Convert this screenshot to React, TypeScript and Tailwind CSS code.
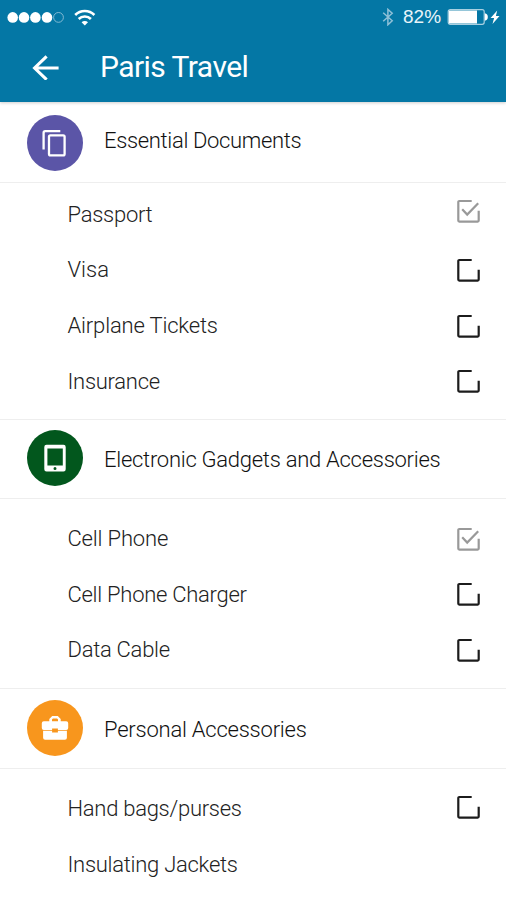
import type { ReactNode } from 'react'
import clsx from 'clsx'

type Item = {
  label: string
  state: 'done' | 'open' | 'none'
  labelClass?: string
  boxClass?: string
}

type Section = {
  title: string
  color: string
  icon: ReactNode
  header: string
  titleClass: string
  list: string
  items: Item[]
}

const sections: Section[] = [
  {
    title: 'Essential Documents',
    color: 'bg-[#5b55a7]',
    icon: <CopyIcon />,
    header: 'h-[81px] pt-px',
    titleClass: 'pb-[3px] tracking-[-0.34px]',
    list: 'pt-[4px] pb-[10px]',
    items: [
      { label: 'Passport', state: 'done', boxClass: 'mb-[7px]' },
      { label: 'Visa', state: 'open', labelClass: 'pb-px tracking-normal' },
      { label: 'Airplane Tickets', state: 'open', labelClass: 'tracking-[-0.17px]' },
      { label: 'Insurance', state: 'open', labelClass: 'pb-px', boxClass: 'mb-px' },
    ],
  },
  {
    title: 'Electronic Gadgets and Accessories',
    color: 'bg-[#02571d]',
    icon: <TabletIcon />,
    header: 'h-[79px] pb-[2px]',
    titleClass: 'pt-[3px] tracking-[-0.27px]',
    list: 'pt-[11px] pb-[11px]',
    items: [
      { label: 'Cell Phone', state: 'done', labelClass: 'tracking-[-0.17px]', boxClass: 'mt-[2px]' },
      { label: 'Cell Phone Charger', state: 'open', labelClass: 'pt-px' },
      { label: 'Data Cable', state: 'open', labelClass: 'pt-px', boxClass: 'mt-[2px]' },
    ],
  },
  {
    title: 'Personal Accessories',
    color: 'bg-[#f8961d]',
    icon: <BriefcaseIcon />,
    header: 'h-[80px] pb-[2px]',
    titleClass: 'pt-[4px] tracking-[-0.23px]',
    list: 'pt-[11px]',
    items: [
      { label: 'Hand bags/purses', state: 'open', labelClass: 'pt-[2px]', boxClass: 'mb-[2px]' },
      { label: 'Insulating Jackets', state: 'none', labelClass: 'pt-[2px]' },
    ],
  },
]

function CopyIcon() {
  return (
    <svg viewBox="0 0 28 28" className="size-7" fill="none" stroke="#fff" strokeWidth="2.3">
      <path d="M19.3 2.1H4.2a1.6 1.6 0 0 0-1.6 1.6V20.4" />
      <rect x="8" y="6.4" width="15.6" height="20" rx="1.4" />
    </svg>
  )
}

function TabletIcon() {
  return (
    <svg viewBox="0 0 24 28" className="h-7 w-6">
      <path
        fill="#fff"
        fillRule="evenodd"
        d="M3.5.8h17a2.2 2.2 0 0 1 2.2 2.2v22.2a2.2 2.2 0 0 1-2.2 2.2h-17a2.2 2.2 0 0 1-2.2-2.2V3A2.2 2.2 0 0 1 3.5.8ZM4.4 4.6v17h15.4v-17ZM12 23.1a1.5 1.5 0 1 0 0 3 1.5 1.5 0 0 0 0-3Z"
      />
    </svg>
  )
}

function BriefcaseIcon() {
  return (
    <svg viewBox="0 0 28 26" className="h-[26px] w-7">
      <path
        fill="#fff"
        fillRule="evenodd"
        d="M8.3 6.3V4L11.2.9h5.6L19.7 4v2.3h5.5a2 2 0 0 1 2 2v4.6a2 2 0 0 1-2 2h-8.3v-1.4h-5.8v1.4H2.8a2 2 0 0 1-2-2V8.3a2 2 0 0 1 2-2ZM11 6.3h6V4.5l-.9-1h-4.2l-.9 1Z"
      />
      <path fill="#fff" d="M2.1 15.8h9v1.7h5.8v-1.7h9v7a2 2 0 0 1-2 2H4.1a2 2 0 0 1-2-2Z" />
    </svg>
  )
}

function Checkbox({ done, className }: { done: boolean; className?: string }) {
  return (
    <svg
      viewBox="0 0 24 24"
      className={clsx('size-6 shrink-0', done ? 'text-[#999]' : 'text-[#1c1c1c]', className)}
      fill="none"
      stroke="currentColor"
      strokeWidth="2.2"
    >
      <path d="M15.7 2H3.3a1 1 0 0 0-1 1v18.6a1 1 0 0 0 1 1h18.4a1 1 0 0 0 1-1V11.7" />
      {done && <path d="M6.2 10.3 11.2 15.6 22.2 4.2" />}
    </svg>
  )
}

function StatusBar() {
  return (
    <div className="flex h-[34px] items-center justify-between pr-[6px] pl-[7px]">
      <div className="flex items-center">
        <svg viewBox="0 0 58 12" className="h-3 w-[58px]" fill="#fff">
          <circle cx="5.7" cy="6.4" r="5.3" />
          <circle cx="17" cy="6.4" r="5.3" />
          <circle cx="28.4" cy="6.4" r="5.3" />
          <circle cx="40" cy="6.4" r="5.3" />
          <circle cx="51.5" cy="6.4" r="4.9" fill="none" stroke="#8fc0d7" strokeWidth=".9" />
        </svg>
        <svg viewBox="0 0 22 17" className="ml-[9px] h-[17px] w-[22px]" fill="none" stroke="#fff" strokeWidth="2.6">
          <path d="M1.2 6a13.6 13.6 0 0 1 19.2 0" />
          <path d="M4.7 10a8.6 8.6 0 0 1 12.2 0" />
          <path d="M10.8 16.6 7.6 13.3a4.6 4.6 0 0 1 6.4 0Z" fill="#fff" stroke="none" />
        </svg>
      </div>
      <div className="flex items-center">
        <svg viewBox="0 0 12 18" className="h-[18px] w-3" fill="none" stroke="#8fc0d7" strokeWidth="1.5">
          <path d="m1.2 4.8 9 8-4.3 4V1.4l4.3 3.8-9 8" />
        </svg>
        <span className="ml-[9px] w-[40px] pb-px font-['Liberation_Sans'] text-[19px] leading-none text-[#e8f4f9]">
          82%
        </span>
        <svg viewBox="0 0 53 18" className="ml-[4px] h-[18px] w-[53px]">
          <rect x="1.2" y="1.7" width="36" height="14.6" rx="2" fill="none" stroke="#a9d0e1" strokeWidth="1.2" />
          <path d="M1.8 2.5H30v13H1.8z" fill="#fff" />
          <path d="M37.8 5.3q3 .6 3 3.7t-3 3.7Z" fill="#fff" />
          <path d="m50.2 2.5-6.6 7.4h3.5l-1.6 6 7-8h-3.6Z" fill="#fff" />
        </svg>
      </div>
    </div>
  )
}

export default function App() {
  return (
    <div className="h-[900px] w-[506px] overflow-hidden bg-white font-[Roboto,sans-serif]">
      <header className="h-[102px] bg-[#0477a5] shadow-[0_1px_3px_rgba(0,0,0,0.2)]">
        <StatusBar />
        <div className="flex h-[66px] items-center pl-[32px] text-white">
          <svg viewBox="0 0 27 26" className="h-[26px] w-[27px]" fill="none" stroke="#fff" strokeWidth="3.1">
            <path d="M26.6 14H3M14.6 2.4 2.6 14l12 11.6" />
          </svg>
          <h1 className="ml-[41px] text-[30px] leading-none tracking-[-0.55px]">Paris Travel</h1>
        </div>
      </header>

      {sections.map((section, index) => (
        <section key={section.title} className={clsx(index > 0 && 'border-t border-[#eee]')}>
          <div className={clsx('flex items-center border-b border-[#eee] pl-[27px]', section.header)}>
            <div className={clsx('flex size-14 shrink-0 items-center justify-center rounded-full', section.color)}>
              {section.icon}
            </div>
            <h2 className={clsx('ml-[21px] text-[22px] leading-7 font-light text-[#111]', section.titleClass)}>
              {section.title}
            </h2>
          </div>
          <ul className={section.list}>
            {section.items.map((item) => (
              <li
                key={item.label}
                className="flex h-[55.6px] items-center justify-between pr-[26px] pl-[67.5px] text-[22px] font-light tracking-[-0.27px] text-[#222]"
              >
                <span className={item.labelClass}>{item.label}</span>
                {item.state !== 'none' && <Checkbox done={item.state === 'done'} className={item.boxClass} />}
              </li>
            ))}
          </ul>
        </section>
      ))}
    </div>
  )
}
